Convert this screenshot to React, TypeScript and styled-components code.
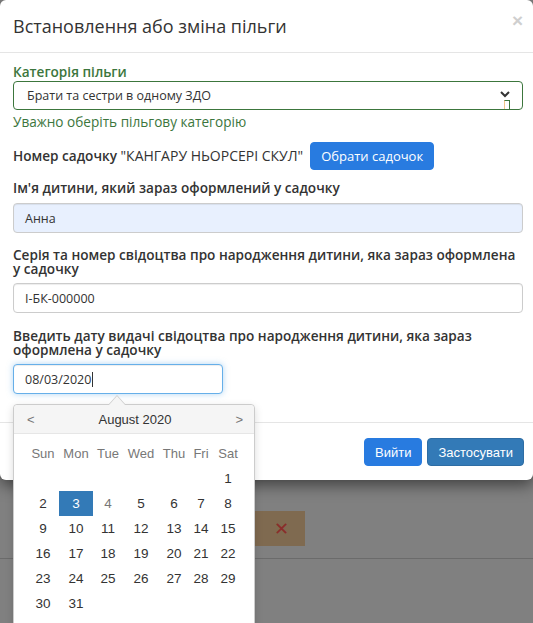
import React from "react";
import styled, { createGlobalStyle } from "styled-components";

const Global = createGlobalStyle`
  html, body { margin: 0; padding: 0; }
  body { background: #808080; font-family: "Open Sans", "Noto Sans", sans-serif; color: #333; }
  * { box-sizing: border-box; }
`;

const Page = styled.div`
  position: relative;
  height: 623px;
  overflow: hidden;
  background: #808080;
`;

const Modal = styled.div`
  background: #fff;
  border-radius: 6px;
  box-shadow: 0 5px 15px rgba(0, 0, 0, 0.5);
  width: 100%;
  position: relative;
  z-index: 1;
`;

const Header = styled.div`
  height: 53px;
  border-bottom: 1px solid #e5e5e5;
  display: flex;
  align-items: center;
  justify-content: space-between;
  padding: 0 10px 0 13px;
`;

const Title = styled.h4`
  margin: 0;
  margin-top: -1px;
  font-size: 18px;
  font-weight: 400;
  color: #333;
`;

const Close = styled.span`
  font-family: "Liberation Sans", Arial, sans-serif;
  font-size: 19px;
  font-weight: 700;
  color: #cfcfcf;
  margin-top: -12px;
  line-height: 1;
`;

const Body = styled.div`
  padding: 10px 10px 0 13px;
`;

const Group = styled.div<{ $mb?: number }>`
  margin-bottom: ${(p) => p.$mb ?? 0}px;
  position: relative;
`;

const Label = styled.div<{ $color?: string; $lh?: number }>`
  font-size: 13.6px;
  font-weight: 600;
  color: ${(p) => p.$color ?? "#333"};
  line-height: ${(p) => p.$lh ?? 20}px;
`;

const Help = styled.div`
  font-size: 13.6px;
  color: #3c763d;
  line-height: 20px;
  margin-top: 2px;
`;

const SelectBox = styled.div`
  height: 29px;
  border: 1px solid #3c763d;
  border-radius: 4px;
  display: flex;
  align-items: center;
  padding-left: 13px;
  font-size: 12.5px;
  color: #333;
  position: relative;
`;

const Chevron = styled.svg`
  position: absolute;
  right: 12px;
  top: 9px;
`;

const Marker = styled.span`
  position: absolute;
  right: 12px;
  bottom: 0;
  width: 6px;
  height: 9px;
  border: 1px solid #3c763d;
  border-left-color: #f3c78a;
  border-bottom: none;
  background: #fff;
`;

const Input = styled.div<{ $bg?: string; $focus?: boolean; $w?: string }>`
  height: 30px;
  width: ${(p) => p.$w ?? "100%"};
  border: 1px solid ${(p) => (p.$focus ? "#66afe9" : "#ccc")};
  box-shadow: ${(p) =>
    p.$focus
      ? "inset 0 1px 1px rgba(0,0,0,.075), 0 0 6px rgba(102,175,233,.5)"
      : "inset 0 1px 1px rgba(0,0,0,.075)"};
  border-radius: 4px;
  background: ${(p) => p.$bg ?? "#fff"};
  display: flex;
  align-items: center;
  padding-left: 11px;
  font-size: 12.5px;
  color: #333;
`;

const Caret = styled.span`
  display: inline-block;
  width: 1px;
  height: 15px;
  background: #333;
  margin-left: 1px;
`;

const KinderRow = styled.div`
  display: flex;
  align-items: center;
  gap: 7px;
  font-size: 13.6px;
  height: 28px;
  margin-top: 10px;
`;

const Normal = styled.span`
  font-weight: 400;
  font-size: 14px;
`;

const Spacer = styled.div<{ $h: number }>`
  height: ${(p) => p.$h}px;
`;

const Btn = styled.button<{ $variant?: "bright" | "primary"; $arial?: boolean }>`
  font-family: ${(p) =>
    p.$arial ? '"Liberation Sans", Arial, sans-serif' : '"Open Sans", "Noto Sans", sans-serif'};
  font-size: 13px;
  color: #fff;
  border-radius: 4px;
  cursor: pointer;
  padding: 0 10px;
  height: 28px;
  background: ${(p) => (p.$variant === "primary" ? "#337ab7" : "#287be0")};
  border: 1px solid ${(p) => (p.$variant === "primary" ? "#2e6da4" : "#287be0")};
`;

const Footer = styled.div`
  margin-top: 28px;
  border-top: 1px solid #e5e5e5;
  height: 58px;
  display: flex;
  justify-content: flex-end;
  align-items: flex-start;
  padding: 15px 9px 0 0;
  gap: 5px;
`;

const Behind = styled.div`
  padding-top: 31px;
  display: flex;
  flex-direction: column;
`;

const Toast = styled.div`
  align-self: flex-start;
  margin-left: 200px;
  width: 105px;
  height: 35px;
  background: #7f6a50;
  display: flex;
  align-items: center;
  justify-content: flex-end;
  padding-right: 16px;
  color: #8a2d2a;
  font-family: "Liberation Sans", Arial, sans-serif;
  font-size: 18px;
`;

const Rule = styled.div`
  margin-top: 12px;
  height: 1px;
  background: #6b6b6b;
`;

/* datepicker */
const Picker = styled.div`
  position: absolute;
  top: 40px;
  left: 0;
  width: 242px;
  background: #fff;
  border: 1px solid #ccc;
  border-radius: 4px;
  box-shadow: 0 3px 8px rgba(0, 0, 0, 0.15);
  font-family: "Liberation Sans", Arial, sans-serif;
  z-index: 5;
  height: 240px;
  &::before {
    content: "";
    position: absolute;
    top: -10px;
    left: 94px;
    border: 9px solid transparent;
    border-top: 0;
    border-bottom: 10px solid #ccc;
  }
  &::after {
    content: "";
    position: absolute;
    top: -9px;
    left: 95px;
    border: 8px solid transparent;
    border-top: 0;
    border-bottom: 9px solid #f5f5f5;
  }
`;

const PickerHead = styled.div`
  height: 29px;
  background: #f5f5f5;
  border-bottom: 1px solid #e6e6e6;
  border-radius: 4px 4px 0 0;
  display: flex;
  align-items: center;
  justify-content: space-between;
  padding: 0 11px 0 13px;
  font-size: 13px;
  color: #333;
`;

const Nav = styled.span`
  color: #777;
  font-size: 13px;
`;

const Grid = styled.div`
  display: grid;
  grid-template-columns: 32px 34px 30px 36px 30px 24px 30px;
  grid-auto-rows: 25px;
  padding: 7px 0 0 13px;
`;

const Cell = styled.div<{ $head?: boolean; $sel?: boolean; $muted?: boolean }>`
  display: flex;
  align-items: center;
  justify-content: center;
  font-size: ${(p) => (p.$head ? "13px" : "13.5px")};
  color: ${(p) => (p.$sel ? "#fff" : p.$head || p.$muted ? "#777" : "#333")};
  background: ${(p) => (p.$sel ? "#337ab7" : "transparent")};
`;

const heads = ["Sun", "Mon", "Tue", "Wed", "Thu", "Fri", "Sat"];

function Calendar() {
  const cells: (number | null)[] = [null, null, null, null, null, null];
  for (let d = 1; d <= 31; d++) cells.push(d);
  return (
    <Picker>
      <PickerHead>
        <Nav>&lt;</Nav>
        <span>August 2020</span>
        <Nav>&gt;</Nav>
      </PickerHead>
      <Grid>
        {heads.map((h) => (
          <Cell key={h} $head>
            {h}
          </Cell>
        ))}
        {cells.map((d, i) => (
          <Cell key={i} $sel={d === 3} $muted={d === 4}>
            {d ?? ""}
          </Cell>
        ))}
      </Grid>
    </Picker>
  );
}

export default function App() {
  return (
    <Page>
      <Global />
      <Modal>
        <Header>
          <Title>Встановлення або зміна пільги</Title>
          <Close>×</Close>
        </Header>
        <Body>
          <Group>
            <Label $color="#3c763d" $lh={18}>
              Категорія пільги
            </Label>
            <SelectBox>
              Брати та сестри в одному ЗДО
              <Chevron width="10" height="7" viewBox="0 0 10 7">
                <path d="M1 1l4 4 4-4" fill="none" stroke="#333" strokeWidth="2" />
              </Chevron>
              <Marker />
            </SelectBox>
            <Help>Уважно оберіть пільгову категорію</Help>
          </Group>
          <Group $mb={8}>
            <KinderRow>
              <Label as="span">
                Номер садочку <Normal>"КАНГАРУ НЬОРСЕРІ СКУЛ"</Normal>
              </Label>
              <Btn $variant="bright">Обрати садочок</Btn>
            </KinderRow>
          </Group>
          <Group $mb={15}>
            <Label>Ім'я дитини, який зараз оформлений у садочку</Label>
            <Spacer $h={5} />
            <Input $bg="#e8f0fe">Анна</Input>
          </Group>
          <Group $mb={16}>
            <Label $lh={14}>
              Серія та номер свідоцтва про народження дитини, яка зараз оформлена у садочку
            </Label>
            <Spacer $h={7} />
            <Input>І-БК-000000</Input>
          </Group>
          <Group>
            <Label $lh={14}>
              Введить дату видачі свідоцтва про народження дитини, яка зараз оформлена у садочку
            </Label>
            <Spacer $h={7} />
            <Group>
              <Input $focus $w="210px">
                08/03/2020
                <Caret />
              </Input>
              <Calendar />
            </Group>
          </Group>
        </Body>
        <Footer>
          <Btn $variant="bright" $arial>
            Вийти
          </Btn>
          <Btn $variant="primary" $arial>
            Застосувати
          </Btn>
        </Footer>
      </Modal>
      <Behind>
        <Toast>✕</Toast>
        <Rule />
      </Behind>
    </Page>
  );
}
